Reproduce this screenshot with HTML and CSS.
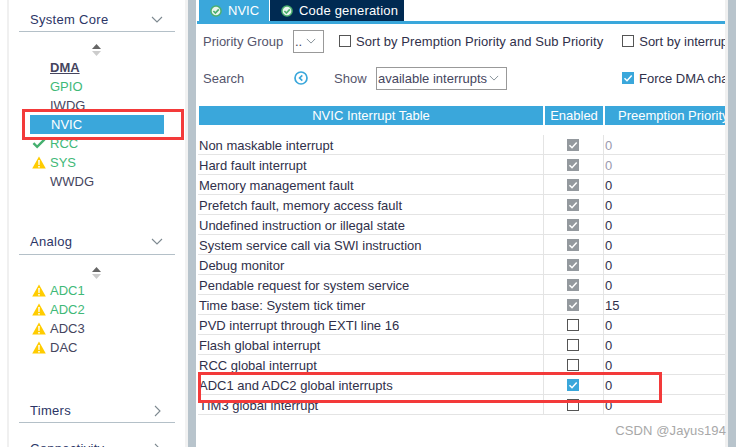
FILE: index.html
```html
<!DOCTYPE html>
<html lang="en">
<head>
<meta charset="utf-8">
<title>NVIC</title>
<link rel="stylesheet" href="styles.css">
</head>
<body>
<svg class="defs" width="0" height="0" aria-hidden="true">
  <symbol id="warn" viewBox="0 0 14 13"><path d="M7 .5 13.8 12.500H.2Z" fill="#fc0"/><path d="M6.200 4h1.600l-.2 5H6.400ZM6.200 10h1.600v1.600H6.200Z" fill="#fff"/></symbol>
  <symbol id="ok" viewBox="0 0 14 14"><path d="M1 6.500 5 10.500 13 2.500" fill="none" stroke="#45b06f" stroke-width="2.600"/></symbol>
  <symbol id="tabok" viewBox="0 0 12 12"><circle cx="6" cy="6" r="5.800" fill="#4caf6e"/><circle cx="6" cy="6" r="4.300" fill="#e9f5ee"/><path d="M3.400 6 5.400 8 8.800 4.400" fill="none" stroke="#4caf6e" stroke-width="1.700"/></symbol>
  <symbol id="tick" viewBox="0 0 12 12"><path d="M2.500 6.200 5 8.700 9.700 3.400" fill="none" stroke="#fff" stroke-width="1.500"/></symbol>
  <symbol id="updown" viewBox="0 0 9 12"><path d="M4.500 0 9 5H0Z" fill="#666"/><path d="M4.500 12 9 7H0Z" fill="#ccc"/></symbol>
</svg>
<div class="app">
  <aside class="side">
    <div class="side-inner">
      <section class="group group-core">
        <header class="group-head"><span>System Core</span><svg class="chev" viewBox="0 0 12 7"><path d="M1 1 6 6 11 1"/></svg></header>
        <svg class="updown"><use href="#updown"/></svg>
        <ul class="items">
          <li class="item dma">DMA</li>
          <li class="item green">GPIO</li>
          <li class="item">IWDG</li>
          <li class="item selected">NVIC</li>
          <li class="item green"><svg class="ico"><use href="#ok"/></svg>RCC</li>
          <li class="item green"><svg class="ico"><use href="#warn"/></svg>SYS</li>
          <li class="item">WWDG</li>
        </ul>
      </section>
      <section class="group group-analog">
        <header class="group-head"><span>Analog</span><svg class="chev" viewBox="0 0 12 7"><path d="M1 1 6 6 11 1"/></svg></header>
        <svg class="updown"><use href="#updown"/></svg>
        <ul class="items">
          <li class="item green"><svg class="ico"><use href="#warn"/></svg>ADC1</li>
          <li class="item green"><svg class="ico"><use href="#warn"/></svg>ADC2</li>
          <li class="item"><svg class="ico"><use href="#warn"/></svg>ADC3</li>
          <li class="item"><svg class="ico"><use href="#warn"/></svg>DAC</li>
        </ul>
      </section>
      <section class="group group-timers">
        <header class="group-head"><span>Timers</span><svg class="chev right" viewBox="0 0 7 12"><path d="M1 1 6 6 1 11"/></svg></header>
      </section>
      <section class="group group-conn">
        <header class="group-head"><span>Connectivity</span><svg class="chev right" viewBox="0 0 7 12"><path d="M1 1 6 6 1 11"/></svg></header>
      </section>
    </div>
  </aside>
  <div class="splitter"></div>
  <main class="main">
    <nav class="tabs">
      <div class="tab active"><svg class="tab-ico"><use href="#tabok"/></svg>NVIC</div>
      <div class="tab dark"><svg class="tab-ico"><use href="#tabok"/></svg>Code generation</div>
    </nav>
    <div class="panel">
      <div class="opts opts-1">
        <span class="lbl lbl-pg">Priority Group</span>
        <span class="select select-sm">..<svg class="chev sel" viewBox="0 0 12 7"><path d="M1 1 6 6 11 1"/></svg></span>
        <span class="check-lbl cl-1"><i class="box"></i>Sort by Premption Priority and Sub Priority</span>
        <span class="check-lbl cl-2"><i class="box"></i>Sort by interrupts in NVIC</span>
      </div>
      <div class="opts opts-2">
        <span class="lbl lbl-search">Search</span>
        <svg class="back" viewBox="0 0 14 14"><circle cx="7" cy="7" r="6" fill="none" stroke="#3aa7db" stroke-width="1.700"/><path d="M8.300 4.300 5.600 7 8.300 9.700" fill="none" stroke="#3aa7db" stroke-width="1.700"/></svg>
        <span class="lbl lbl-show">Show</span>
        <span class="select select-lg">available interrupts<svg class="chev sel" viewBox="0 0 12 7"><path d="M1 1 6 6 11 1"/></svg></span>
        <span class="check-lbl cl-3"><i class="box on"><svg><use href="#tick"/></svg></i>Force DMA channels</span>
      </div>
      <div class="table">
        <div class="thead">
          <div class="th">NVIC Interrupt Table</div>
          <div class="th">Enabled</div>
          <div class="th th-pre">Preemption Priority</div>
        </div>
        <div class="row"><div class="name">Non maskable interrupt</div><div class="en"><i class="box dis"><svg><use href="#tick"/></svg></i></div><div class="pri muted">0</div></div>
        <div class="row"><div class="name">Hard fault interrupt</div><div class="en"><i class="box dis"><svg><use href="#tick"/></svg></i></div><div class="pri muted">0</div></div>
        <div class="row"><div class="name">Memory management fault</div><div class="en"><i class="box dis"><svg><use href="#tick"/></svg></i></div><div class="pri">0</div></div>
        <div class="row"><div class="name">Prefetch fault, memory access fault</div><div class="en"><i class="box dis"><svg><use href="#tick"/></svg></i></div><div class="pri">0</div></div>
        <div class="row"><div class="name">Undefined instruction or illegal state</div><div class="en"><i class="box dis"><svg><use href="#tick"/></svg></i></div><div class="pri">0</div></div>
        <div class="row"><div class="name">System service call via SWI instruction</div><div class="en"><i class="box dis"><svg><use href="#tick"/></svg></i></div><div class="pri">0</div></div>
        <div class="row"><div class="name">Debug monitor</div><div class="en"><i class="box dis"><svg><use href="#tick"/></svg></i></div><div class="pri">0</div></div>
        <div class="row"><div class="name">Pendable request for system service</div><div class="en"><i class="box dis"><svg><use href="#tick"/></svg></i></div><div class="pri">0</div></div>
        <div class="row"><div class="name">Time base: System tick timer</div><div class="en"><i class="box dis"><svg><use href="#tick"/></svg></i></div><div class="pri">15</div></div>
        <div class="row"><div class="name">PVD interrupt through EXTI line 16</div><div class="en"><i class="box"></i></div><div class="pri">0</div></div>
        <div class="row"><div class="name">Flash global interrupt</div><div class="en"><i class="box"></i></div><div class="pri">0</div></div>
        <div class="row"><div class="name">RCC global interrupt</div><div class="en"><i class="box"></i></div><div class="pri">0</div></div>
        <div class="row"><div class="name">ADC1 and ADC2 global interrupts</div><div class="en"><i class="box on"><svg><use href="#tick"/></svg></i></div><div class="pri">0</div></div>
        <div class="row"><div class="name">TIM3 global interrupt</div><div class="en"><i class="box"></i></div><div class="pri">0</div></div>
      </div>
    </div>
  </main>
  <div class="scrollbar"></div>
</div>
<div class="mark mark-nvic"></div>
<div class="mark mark-adc"></div>
<div class="watermark">CSDN @Jayus194</div>
</body>
</html>
```
FILE: styles.css
```css
* { box-sizing: border-box; }
html, body { margin: 0; height: 100%; }
body {
  position: relative;
  width: 741px;
  height: 447px;
  overflow: hidden;
  background: #fff;
  font-family: "Liberation Sans", Arial, sans-serif;
  font-size: 13px;
  color: #30304a;
}
.defs { position: absolute; }
ul { list-style: none; margin: 0; padding: 0; }
i { display: block; }

.app { display: flex; height: 447px; }

/* sidebar */
.side { width: 188px; padding-left: 7px; background: #fff; flex: none; overflow: hidden; }
.side-inner {
  height: 447px;
  border-left: 2px solid #f0f0f0;
  border-right: 3px solid #f2f2f2;
  padding: 8px 10px 0;
  overflow: hidden;
}
.group-head {
  display: flex;
  justify-content: space-between;
  align-items: center;
  height: 24px;
  padding: 0 12px 0 11px;
  border-bottom: 1px solid #b4c0c8;
  font-size: 13px;
  letter-spacing: .3px;
  color: #2c3566;
}
.group-analog { margin-top: 40px; }
.group-analog .group-head { padding-bottom: 2px; }
.group-timers { margin-top: 42px; }
.group-conn { margin-top: 14px; }
.chev { width: 12px; height: 7px; fill: none; stroke: #7d8990; stroke-width: 1.100; }
.chev.right { width: 7px; height: 12px; margin-right: 2px; }
.updown { display: block; width: 9px; height: 12px; margin: 12px 0 0 73px; }
.items { margin-top: 2px; }
.item {
  display: flex;
  align-items: center;
  height: 19px;
  margin-left: 11px;
  padding-left: 20px;
  width: 134px;
  position: relative;
  color: #45455e;
}
.item.green { color: #3fb978; }
.item.dma { font-weight: bold; text-decoration: underline; }
.item.selected { background: #3aa7db; color: #fff; padding-left: 21px; }
.ico { position: absolute; left: 2px; top: 3px; width: 14px; height: 13px; }

.splitter { width: 8px; flex: none; background: #b8c4cc; }

/* main */
.main { width: 529px; flex: none; padding-left: 1px; overflow: hidden; }
.tabs { display: flex; height: 21px; padding-left: 2px; gap: 1px; }
.tab {
  display: flex;
  align-items: center;
  height: 21px;
  color: #fff;
  padding-left: 11px;
  background: #3aa7db;
  width: 70px;
}
.tab.dark { background: #002a52; width: 134px; padding-left: 11px; letter-spacing: .2px; }
.tab-ico { width: 12px; height: 12px; margin-right: 6px; flex: none; }
.panel { border-top: 3px solid #3aa7db; height: 423px; }

.opts { display: flex; align-items: center; white-space: nowrap; overflow: hidden; }
.opts-1 { height: 34px; padding-left: 6px; }
.opts-2 { height: 40px; padding-left: 6px; }
.lbl { color: #55556c; }
.lbl-pg { width: 90px; flex: none; }
.lbl-search { width: 91px; flex: none; }
.back { width: 14px; height: 14px; flex: none; }
.lbl-show { margin-left: 26px; flex: none; width: 32px; }
.select {
  display: flex;
  align-items: center;
  justify-content: space-between;
  height: 23px;
  flex: none;
  border: 1px solid #999;
  padding: 0 7px 0 1px;
  color: #45455e;
}
.select-sm { width: 31px; }
.select-lg { width: 131px; margin-left: 10px; }
.chev.sel { width: 10px; height: 6px; }
.check-lbl { display: flex; align-items: center; color: #30304a; flex: none; }
.check-lbl .box { margin-right: 5px; }
.cl-1 { margin-left: 15px; letter-spacing: .07px; }
.cl-2 { margin-left: 19px; }
.cl-3 { margin-left: 115px; }
.box { width: 12px; height: 12px; border: 1px solid #555; flex: none; position: relative; }
.box svg { position: absolute; left: -1px; top: -1px; width: 12px; height: 12px; }
.box.on { background: #3aa7db; border-color: #3aa7db; }
.box.dis { background: #94999e; border-color: #94999e; }

.table { padding-left: 2px; }
.thead, .row { display: grid; grid-template-columns: 346px 60px 120px; }
.thead { height: 19px; margin-top: 8px; }
.th {
  background: #3aa7db;
  color: #fff;
  text-align: center;
  line-height: 19px;
  margin-right: 2px;
  overflow: hidden;
  white-space: nowrap;
}
.th-pre { margin-right: 0; padding-left: 13px; text-align: left; }
.thead + .row { margin-top: 10px; }
.row { height: 20px; border-bottom: 1px solid #e4e4e4; line-height: 19px; margin-left: -1px; }
.name { padding: 1px 0 0 1px; white-space: nowrap; border-right: 1px solid #e4e4e4; }
.en { display: flex; justify-content: center; align-items: center; border-right: 1px solid #e4e4e4; margin-left: -1px; }
.pri { padding: 1px 0 0 1px; }
.pri.muted { color: #9a9aae; }

.scrollbar { flex: none; width: 11px; border-left: 3px solid #f0f0f0; background: #b8c4cc; }

/* annotations */
.mark { position: absolute; border: 3px solid #f33a3a; }
.mark-nvic { left: 22px; top: 109px; width: 162px; height: 31px; }
.mark-adc { left: 198px; top: 372px; width: 464px; height: 31px; }
.watermark {
  position: absolute;
  right: 15px;
  top: 423px;
  font-size: 13px;
  letter-spacing: .1px;
  color: #a8a8a8;
}
```
